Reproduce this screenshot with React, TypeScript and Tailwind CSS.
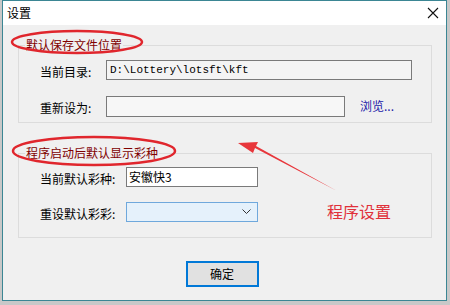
const cjk = { fontFamily: '"Noto Sans CJK SC", "Liberation Sans", sans-serif' };

function Label({ children }: { children: React.ReactNode }) {
  return <span className="text-[12px] leading-none text-black">{children}</span>;
}

export default function App() {
  return (
    <div className="relative w-[450px] h-[305px] overflow-hidden bg-[#c8c8c8]" style={cjk}>
      {/* window */}
      <div className="ml-[2px] w-[445px] h-[301px] border border-[#3b8694] bg-[#f0f0f0] flex flex-col">
        {/* title bar */}
        <div className="h-[24px] bg-white flex items-center justify-between pl-[4px] pr-[7px]">
          <span className="text-[12px] text-black">设置</span>
          <svg width="12" height="12" viewBox="0 0 12 12">
            <path d="M1 1 L11 11 M11 1 L1 11" stroke="#111" strokeWidth="1.1" />
          </svg>
        </div>

        {/* group 1 */}
        <div className="mt-[20px] ml-[15px] w-[414px] h-[78px] border border-[#dcdcdc] flex flex-col">
          <span className="-mt-[8px] ml-[6px] w-fit bg-[#f0f0f0] px-[1px] text-[12px] leading-[14px] text-[#800000]">
            默认保存文件位置
          </span>
          <div className="mt-[6px] flex items-center pl-[21px]">
            <span className="w-[66px]"><Label>当前目录:</Label></span>
            <div className="w-[306px] h-[20px] border border-[#7a7a7a] bg-[#f4f4f4] flex items-center pl-[3px]">
              <span className="text-[11px] text-black" style={{ fontFamily: '"Liberation Mono", monospace' }}>
                D:\Lottery\lotsft\kft
              </span>
            </div>
          </div>
          <div className="mt-[12px] flex items-center pl-[21px]">
            <span className="w-[66px]"><Label>重新设为:</Label></span>
            <div className="w-[239px] h-[21px] border border-[#7a7a7a] bg-[#f7f7f7]" />
            <span className="ml-[15px] text-[12px] text-[#1a1aa8]">浏览...</span>
          </div>
        </div>

        {/* group 2 */}
        <div className="mt-[30px] ml-[15px] w-[414px] h-[85px] border border-[#dcdcdc] flex flex-col">
          <span className="-mt-[8px] ml-[6px] w-fit bg-[#f0f0f0] px-[1px] text-[12px] leading-[14px] text-[#800000]">
            程序启动后默认显示彩种
          </span>
          <div className="mt-[5px] flex items-center pl-[21px]">
            <span className="w-[86px]"><Label>当前默认彩种:</Label></span>
            <div className="w-[132px] h-[20px] border border-[#7a7a7a] bg-white flex items-center pl-[2px]">
              <span className="text-[12px] text-black">安徽快3</span>
            </div>
          </div>
          <div className="mt-[11px] flex items-center pl-[21px]">
            <span className="w-[86px]"><Label>重设默认彩彩:</Label></span>
            <div className="w-[132px] h-[20px] border border-[#6fa8dc] bg-[#e5f1fb] flex items-center justify-end pr-[6px]">
              <svg width="9" height="6" viewBox="0 0 9 6">
                <path d="M0.5 0.5 L4.5 4.5 L8.5 0.5" stroke="#333" strokeWidth="1" fill="none" />
              </svg>
            </div>
          </div>
        </div>

        {/* button */}
        <div className="mt-[23px] flex justify-center pr-[5px]">
          <button className="w-[73px] h-[26px] border-2 border-[#0078d7] bg-[#e1e1e1] text-[12px] text-black">
            确定
          </button>
        </div>
      </div>

      {/* annotations */}
      <svg className="absolute left-0 top-0 pointer-events-none" width="450" height="305">
        <ellipse cx="77" cy="42" rx="65" ry="11" fill="none" stroke="#e0262d" strokeWidth="2.5" />
        <ellipse cx="94" cy="151" rx="81" ry="14" fill="none" stroke="#e0262d" strokeWidth="2.5" />
        <polygon points="337,191 255,148 253,153 238,143 258,142 256,146" fill="#e8363b" />
      </svg>
      <span className="absolute left-[327px] top-[201px] text-[16px] leading-[20px] text-[#e0303a]">程序设置</span>
    </div>
  );
}
